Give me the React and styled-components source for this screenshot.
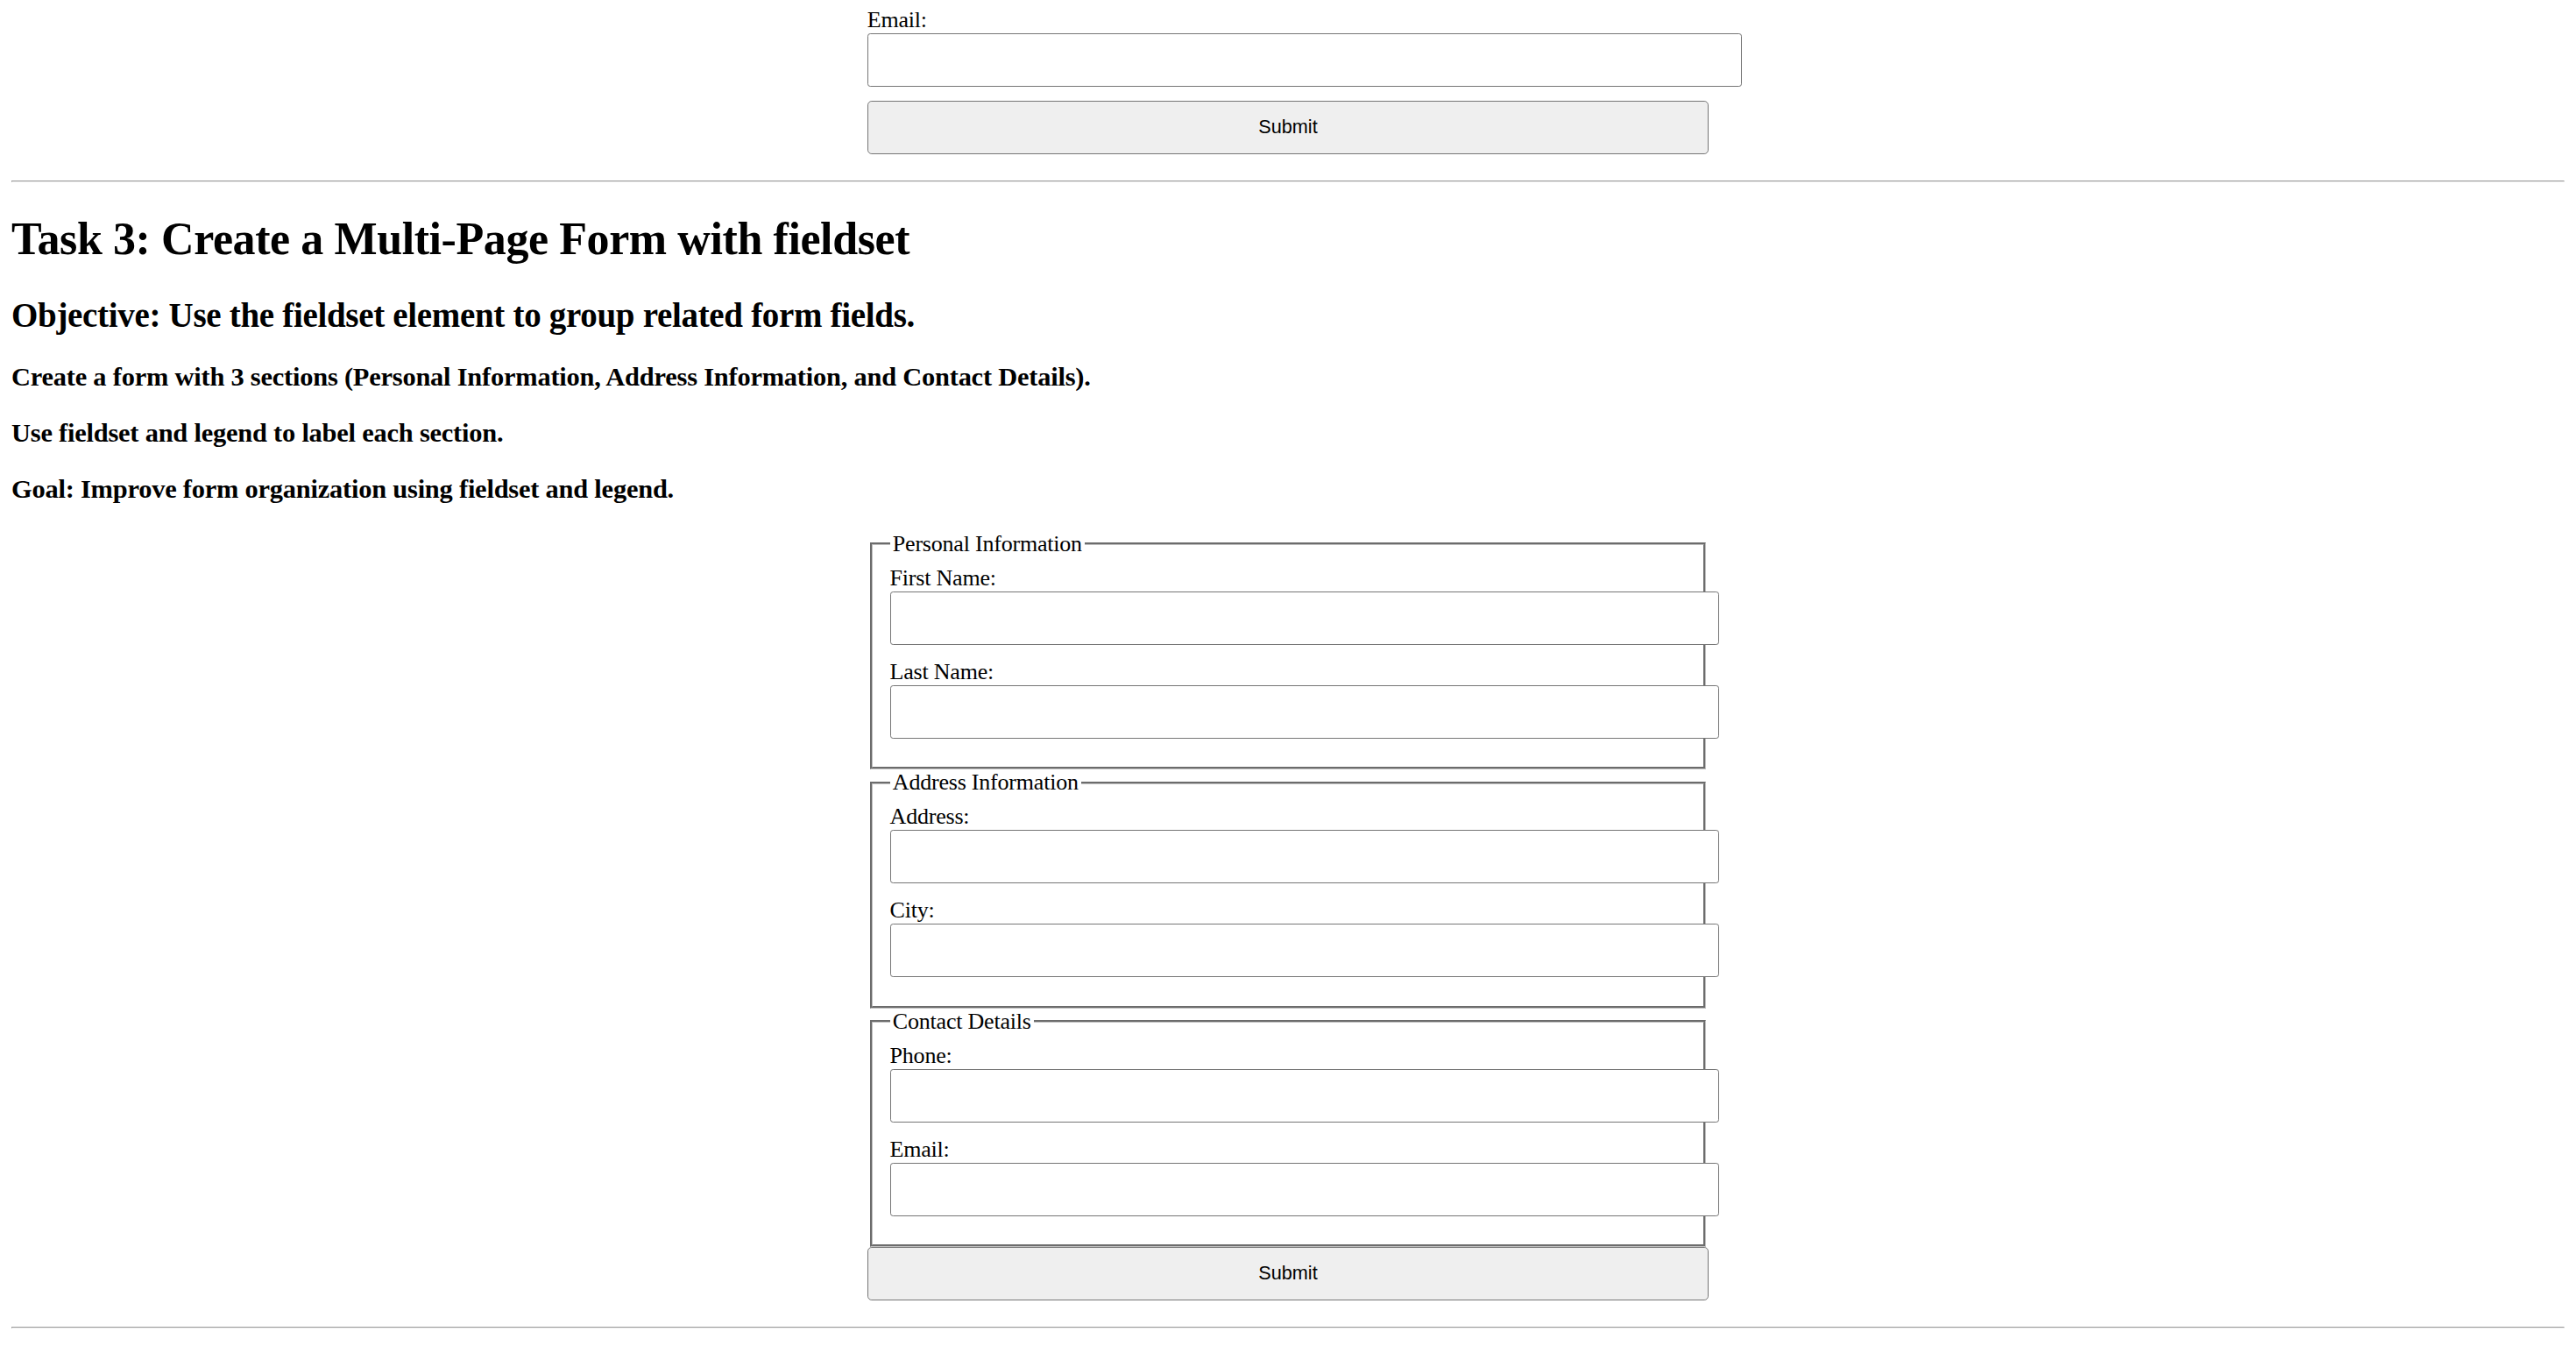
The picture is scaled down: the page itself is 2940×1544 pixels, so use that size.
import React from 'react';
import styled, { createGlobalStyle } from 'styled-components';

const GlobalStyle = createGlobalStyle`
  html {
    zoom: 1.625;
  }
  body {
    margin: 5px 8px 8px;
    background: #fff;
    color: #000;
    font-family: "Liberation Serif", "Times New Roman", serif;
    font-size: 16px;
    letter-spacing: -0.008em;
  }
`

const Form = styled.form`
  display: block;
  width: 591px;
  margin: 0 auto;
  padding-bottom: 10.5px;
`

const Label = styled.label`
  display: block;
  font-size: 16px;
  line-height: normal;
`

const Input = styled.input`
  display: block;
  width: 100%;
  box-sizing: content-box;
  margin: 0 0 10px;
  padding: 10px 11px;
  border: 1px solid #767676;
  border-radius: 2px;
  background: #fff;
  font-family: "Liberation Sans", Arial, sans-serif;
  font-size: 13.333px;
  line-height: 16.2px;
  height: 16.2px;
`

const Button = styled.button`
  display: block;
  width: 100%;
  box-sizing: border-box;
  margin: 0;
  padding: 10px;
  border: 1px solid #767676;
  border-radius: 3px;
  background: #efefef;
  color: #000;
  font-family: "Liberation Sans", Arial, sans-serif;
  font-size: 13.333px;
  line-height: 16.2px;
  letter-spacing: normal;
`

const Divider = styled.hr`
  display: block;
  margin: 8px 0;
  border-style: inset;
  border-width: 1px;
  color: gray;
  overflow: hidden;
`

const Title = styled.h1`
  font-size: 32px;
  font-weight: bold;
  margin: 21.44px 0;
  letter-spacing: -0.008em;
`

const Objective = styled.h2`
  font-size: 24px;
  font-weight: bold;
  margin: 19.92px 0;
  letter-spacing: -0.008em;
`

const Point = styled.h3`
  font-size: 18.72px;
  font-weight: bold;
  margin: 18.72px 0;
  line-height: 1.1;
`

const Fieldset = styled.fieldset`
  margin: 0 2px;
  padding: 0.35em 0.75em 0.625em;
  border: 2px groove rgb(192, 192, 192);
  min-width: min-content;
`

const Legend = styled.legend`
  padding: 0 2px;
  font-size: 16px;
`

const sections = [
  {
    legend: 'Personal Information',
    fields: [
      { id: 'first-name', label: 'First Name:', type: 'text' },
      { id: 'last-name', label: 'Last Name:', type: 'text' },
    ],
  },
  {
    legend: 'Address Information',
    fields: [
      { id: 'address', label: 'Address:', type: 'text' },
      { id: 'city', label: 'City:', type: 'text' },
    ],
  },
  {
    legend: 'Contact Details',
    fields: [
      { id: 'phone', label: 'Phone:', type: 'tel' },
      { id: 'contact-email', label: 'Email:', type: 'email' },
    ],
  },
]

function App() {
  return (
    <>
      <GlobalStyle />
      <Form onSubmit={(e) => e.preventDefault()}>
        <Label htmlFor="email">Email:</Label>
        <Input id="email" type="email" />
        <Button type="submit">Submit</Button>
      </Form>
      <Divider />

      <Title>Task 3: Create a Multi-Page Form with fieldset</Title>
      <Objective>Objective: Use the fieldset element to group related form fields.</Objective>
      <Point>Create a form with 3 sections (Personal Information, Address Information, and Contact Details).</Point>
      <Point>Use fieldset and legend to label each section.</Point>
      <Point>Goal: Improve form organization using fieldset and legend.</Point>

      <Form onSubmit={(e) => e.preventDefault()}>
        {sections.map((section) => (
          <Fieldset key={section.legend}>
            <Legend>{section.legend}</Legend>
            {section.fields.map((field) => (
              <React.Fragment key={field.id}>
                <Label htmlFor={field.id}>{field.label}</Label>
                <Input id={field.id} type={field.type} />
              </React.Fragment>
            ))}
          </Fieldset>
        ))}
        <Button type="submit">Submit</Button>
      </Form>
      <Divider />
    </>
  );
}

export default App;
